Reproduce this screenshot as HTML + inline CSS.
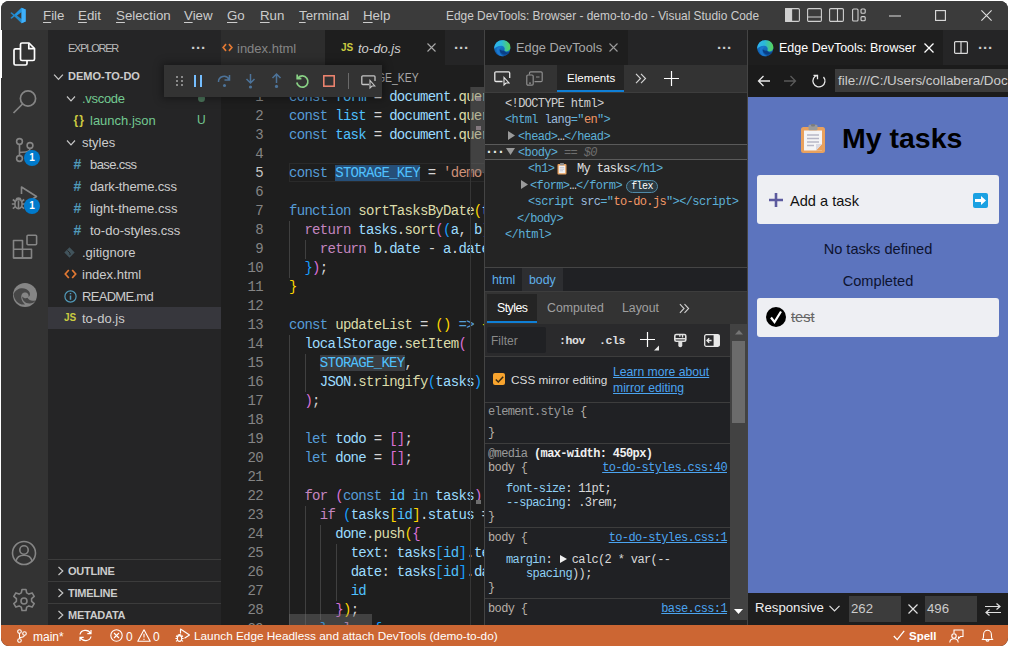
<!DOCTYPE html>
<html lang="en">
<head>
<meta charset="utf-8">
<title>VS Code</title>
<style>
*{box-sizing:border-box;margin:0;padding:0}
html,body{width:1009px;height:647px;overflow:hidden;background:#fff;font-family:"Liberation Sans",sans-serif;}
#win{position:absolute;left:1px;top:1px;width:1007px;height:645px;background:#1e1e1e;border-radius:8px;overflow:hidden;color:#ccc;font-size:13px}
.abs{position:absolute}
.t{position:absolute;white-space:pre;line-height:1}
svg{position:absolute;overflow:visible}
/* title bar */
#title{left:0;top:0;width:1007px;height:29px;background:#3b3b3b}
#title .m{top:8px;font-size:13.3px;color:#ccc}
#title .m u{text-decoration-thickness:1px;text-underline-offset:2px}
/* activity */
#act{left:0;top:29px;width:47px;height:595px;background:#333333}
/* sidebar */
#side{left:47px;top:29px;width:173px;height:595px;background:#252526}
.row{position:absolute;left:0;width:173px;height:22px}
.row .t{top:5px;font-size:13px;color:#ccc}
/* editor 1 */
#ed1{left:220px;top:29px;width:264px;height:595px;background:#1e1e1e;overflow:hidden;border-right:1px solid #444}
.code{position:absolute;left:0;width:400px;height:19px;font-family:"Liberation Mono",monospace;font-size:14px;letter-spacing:-0.7px;line-height:19px;white-space:pre;color:#d4d4d4}
.ln{position:absolute;left:0;width:42px;text-align:right;color:#858585}
.cx{position:absolute;left:68px}
.k{color:#569cd6}.v{color:#9cdcfe}.c{color:#4fc1ff}.f{color:#dcdcaa}.s{color:#ce9178}.p{color:#c586c0}
.b1{color:#ffd700}.b2{color:#da70d6}.b3{color:#179fff}
/* devtools */
#dt{left:484px;top:29px;width:263px;height:595px;background:#242424;overflow:hidden}
.mono{font-family:"Liberation Mono",monospace}
.dm{font-size:12px;letter-spacing:-.63px;margin-top:1px}
/* browser */
#br{left:747px;top:29px;width:260px;height:595px;background:#1e1e1e;overflow:hidden}
#dt{border-right:1px solid #444}
/* status */
#status{left:0;top:624px;width:1007px;height:21px;background:#cc6633;color:#fff}
#status .t{top:6px;font-size:12px;color:#fff}
</style>
</head>
<body>
<div id="win">

<!-- TITLE BAR -->
<div id="title" class="abs">
  <svg style="left:9px;top:6px" width="16" height="17" viewBox="0 0 100 100"><path d="M72 2 L28 44 L10 30 L2 34 L20 50 L2 66 L10 70 L28 56 L72 98 L98 87 L98 13 Z M72 28 L72 72 L43 50 Z" fill="#2489ca"/><path d="M72 2 L98 13 L98 87 L72 98 Z" fill="#3fb0fb"/><path d="M72 2 L28 44 L43 50 L72 28 Z" fill="#1f9cf0" opacity=".6"/></svg>
  <span class="t m" style="left:42px"><u>F</u>ile</span>
  <span class="t m" style="left:77px"><u>E</u>dit</span>
  <span class="t m" style="left:115px"><u>S</u>election</span>
  <span class="t m" style="left:183px"><u>V</u>iew</span>
  <span class="t m" style="left:226px"><u>G</u>o</span>
  <span class="t m" style="left:259px"><u>R</u>un</span>
  <span class="t m" style="left:298px"><u>T</u>erminal</span>
  <span class="t m" style="left:362px"><u>H</u>elp</span>
  <span class="t" style="left:445px;top:10px;font-size:11.9px;color:#ccc">Edge DevTools: Browser - demo-to-do - Visual Studio Code</span>
  <svg style="left:784px;top:7px" width="15" height="14" viewBox="0 0 15 14" fill="none" stroke="#d0d0d0" stroke-width="1.1"><rect x="0.6" y="0.6" width="13.8" height="12.8" rx="1.2"/><rect x="0.6" y="0.6" width="6" height="12.8" fill="#d0d0d0"/></svg>
  <svg style="left:806px;top:7px" width="15" height="14" viewBox="0 0 15 14" fill="none" stroke="#d0d0d0" stroke-width="1.1"><rect x="0.6" y="0.6" width="13.8" height="12.8" rx="1.2"/><path d="M0.6 9 H14.4"/></svg>
  <svg style="left:828px;top:7px" width="15" height="14" viewBox="0 0 15 14" fill="none" stroke="#d0d0d0" stroke-width="1.1"><rect x="0.6" y="0.6" width="13.8" height="12.8" rx="1.2"/><path d="M8.5 0.6 V13.4"/></svg>
  <svg style="left:851px;top:7px" width="14" height="14" viewBox="0 0 14 14" fill="none" stroke="#d0d0d0" stroke-width="1.1"><rect x="0.6" y="1" width="5.4" height="12" rx="1"/><rect x="9" y="1" width="4.2" height="4.2" rx="1"/><rect x="9" y="8.6" width="4.2" height="4.2" rx="1"/></svg>
  <svg style="left:888px;top:14px" width="12" height="2" viewBox="0 0 12 2"><path d="M0 1 H12" stroke="#e0e0e0" stroke-width="1.1"/></svg>
  <svg style="left:934px;top:9px" width="11" height="11" viewBox="0 0 11 11" fill="none" stroke="#e0e0e0" stroke-width="1.1"><rect x="0.6" y="0.6" width="9.8" height="9.8"/></svg>
  <svg style="left:980px;top:9px" width="11" height="11" viewBox="0 0 11 11" stroke="#e0e0e0" stroke-width="1.1"><path d="M0.4 0.4 L10.6 10.6 M10.6 0.4 L0.4 10.6"/></svg>
</div>

<!-- ACTIVITY BAR -->
<div id="act" class="abs">
  <div class="abs" style="left:0;top:0;width:1px;height:48px;background:#fff"></div>
  <!-- files -->
  <svg style="left:11px;top:11px" width="24" height="26" viewBox="0 0 24 26" fill="none" stroke="#fff" stroke-width="1.7" stroke-linejoin="round"><path d="M8.5 7.5 V3.5 a1.5 1.5 0 0 1 1.5 -1.5 H17 L22.5 7.5 V18 a1.5 1.5 0 0 1 -1.5 1.5 H10 a1.5 1.5 0 0 1 -1.5 -1.5 Z"/><path d="M16.8 2.2 V7.7 H22.3"/><path d="M8.5 7.8 H3.5 a1.5 1.5 0 0 0 -1.5 1.5 V22.5 a1.5 1.5 0 0 0 1.5 1.5 H13.5 a1.5 1.5 0 0 0 1.5 -1.5 V19.5"/></svg>
  <!-- search -->
  <svg style="left:11px;top:58px" width="26" height="26" viewBox="0 0 26 26" fill="none" stroke="#858585" stroke-width="1.7"><circle cx="16" cy="10.5" r="7.6"/><path d="M10.5 16 L1.5 25"/></svg>
  <!-- scm -->
  <svg style="left:11px;top:106px" width="26" height="28" viewBox="0 0 26 28" fill="none" stroke="#858585" stroke-width="1.6"><circle cx="7.5" cy="5.5" r="2.9"/><circle cx="7.5" cy="22.5" r="2.9"/><circle cx="18" cy="9.5" r="2.9"/><path d="M7.5 8.4 V19.6 M18 12.4 C18 16.5 13 16 7.5 16.5"/></svg>
  <div class="abs" style="left:23px;top:120px;width:16px;height:16px;border-radius:8px;background:#007acc;color:#fff;font-size:10px;font-weight:bold;text-align:center;line-height:16px">1</div>
  <!-- debug -->
  <svg style="left:10px;top:154px" width="28" height="28" viewBox="0 0 28 28" fill="none" stroke="#858585" stroke-width="1.6" stroke-linejoin="round"><path d="M10.5 10 V3 L25.5 12.5 L19 16.5"/><ellipse cx="7.5" cy="20" rx="3.6" ry="4.6"/><path d="M5 16 a2.6 2.6 0 0 1 5 0 M3.9 20 H0.8 M11.1 20 H14.2 M4.4 17.5 L1.8 15.5 M10.6 17.5 L13.2 15.5 M4.4 22.7 L1.8 24.7 M10.6 22.7 L13.2 24.7 M7.5 16.5 V24.5"/></svg>
  <div class="abs" style="left:23px;top:168px;width:16px;height:16px;border-radius:8px;background:#007acc;color:#fff;font-size:10px;font-weight:bold;text-align:center;line-height:16px">1</div>
  <!-- extensions -->
  <svg style="left:11px;top:204px" width="26" height="26" viewBox="0 0 26 26" fill="none" stroke="#858585" stroke-width="1.6" stroke-linejoin="round"><path d="M1.5 6.5 H10.5 V24 H1.5 Z M1.5 15.2 H19.5 V24 H10.5 M10.5 15.2"/><path d="M1.5 24 H19.5"/><rect x="15" y="1.2" width="9.6" height="9.6" rx="1"/></svg>
  <!-- edge -->
  <svg style="left:12px;top:253px" width="24" height="24" viewBox="0 0 24 24"><circle cx="12" cy="12" r="12" fill="#858585"/><path d="M0.5 11 C3 5.5 9 4 13 6 C17.5 8.2 18 12.5 15.5 14 C16.5 10.5 13 8.5 10.5 9.8 C7 11.5 7.5 17.5 12 21.5 C6 22.5 1 17 0.5 11 Z" fill="#333" opacity=".75"/><path d="M9.2 13.5 C9 17 12 20.5 16.5 20.5 C19 20.5 21.5 19.3 22.8 17.2 C20 18.2 16 18 14.5 14.8 C13.5 15.5 10.5 15.5 9.2 13.5 Z" fill="#333" opacity=".75"/></svg>
  <!-- account -->
  <svg style="left:10px;top:510px" width="26" height="26" viewBox="0 0 26 26" fill="none" stroke="#858585" stroke-width="1.6"><circle cx="13" cy="13" r="11.5"/><circle cx="13" cy="10" r="4.2"/><path d="M5 21 C6 16.5 9 15.2 13 15.2 C17 15.2 20 16.5 21 21"/></svg>
  <!-- gear -->
  <svg style="left:10px;top:558px" width="26" height="26" viewBox="0 0 26 26" fill="none" stroke="#858585" stroke-width="1.6" stroke-linejoin="round"><circle cx="13" cy="13" r="3"/><path d="M11 1.5 h4 l.7 3.4 2.2 1.2 3.2-1.2 2.1 3.5 -2.6 2.3 v2.6 l2.6 2.3 -2.1 3.5 -3.2-1.2 -2.2 1.2 -.7 3.4 h-4 l-.7-3.4 -2.2-1.2 -3.2 1.2 -2.1-3.5 2.6-2.3 v-2.6 l-2.6-2.3 2.1-3.5 3.2 1.2 2.2-1.2 Z"/></svg>
</div>

<!-- SIDEBAR -->
<div id="side" class="abs">
  <span class="t" style="left:20px;top:13px;font-size:11px;letter-spacing:-1.25px;color:#bbb">EXPLORER</span>
  <span class="t" style="left:143px;top:10px;font-size:15px;color:#ccc;letter-spacing:0;font-weight:bold">···</span>
  <div class="row" style="top:35px"><svg style="left:5px;top:8px" width="11" height="8.8" viewBox="0 0 10 8" fill="none" stroke="#c5c5c5" stroke-width="1.2"><path d="M1 1.5 L5 5.8 L9 1.5"/></svg><span class="t" style="left:20px;top:6px;font-size:11px;font-weight:bold;color:#ccc">DEMO-TO-DO</span></div>
  <div class="row" style="top:57px"><svg style="left:18px;top:8px" width="10" height="8" viewBox="0 0 10 8" fill="none" stroke="#c5c5c5" stroke-width="1.2"><path d="M1 1.5 L5 5.8 L9 1.5"/></svg><span class="t" style="left:34px;color:#73c991;letter-spacing:-.3px">.vscode</span><div class="abs" style="left:150px;top:8px;width:7px;height:7px;border-radius:4px;background:#73c991;opacity:.5"></div></div>
  <div class="row" style="top:79px"><span class="t" style="left:25.5px;top:5px;font-size:12px;font-weight:bold;color:#cbcb41;letter-spacing:1px">{}</span><span class="t" style="left:42px;color:#73c991">launch.json</span><span class="t" style="left:149px;top:5px;font-size:12px;color:#73c991">U</span></div>
  <div class="row" style="top:101px"><svg style="left:18px;top:8px" width="10" height="8" viewBox="0 0 10 8" fill="none" stroke="#c5c5c5" stroke-width="1.2"><path d="M1 1.5 L5 5.8 L9 1.5"/></svg><span class="t" style="left:34px">styles</span></div>
  <div class="row" style="top:123px"><span class="t" style="left:25.5px;top:4px;font-size:14px;font-weight:bold;color:#519aba">#</span><span class="t" style="left:42px;letter-spacing:-.6px">base.css</span></div>
  <div class="row" style="top:145px"><span class="t" style="left:25.5px;top:4px;font-size:14px;font-weight:bold;color:#519aba">#</span><span class="t" style="left:42px;letter-spacing:-.15px">dark-theme.css</span></div>
  <div class="row" style="top:167px"><span class="t" style="left:25.5px;top:4px;font-size:14px;font-weight:bold;color:#519aba">#</span><span class="t" style="left:42px">light-theme.css</span></div>
  <div class="row" style="top:189px"><span class="t" style="left:25.5px;top:4px;font-size:14px;font-weight:bold;color:#519aba">#</span><span class="t" style="left:42px">to-do-styles.css</span></div>
  <div class="row" style="top:211px"><svg style="left:16px;top:6px" width="11" height="11" viewBox="0 0 11 11"><path d="M5.5 0.3 L10.7 5.5 L5.5 10.7 L0.3 5.5 Z" fill="#41535b"/><path d="M3.5 3.5 L6 6 M6 6 V8" stroke="#252526" stroke-width="1" fill="none"/></svg><span class="t" style="left:34px">.gitignore</span></div>
  <div class="row" style="top:233px"><svg style="left:16px;top:6px" width="13" height="10" viewBox="0 0 13 10" fill="none" stroke="#e37933" stroke-width="1.7"><path d="M4.8 1 L1.3 5 L4.8 9 M8.2 1 L11.7 5 L8.2 9"/></svg><span class="t" style="left:34px">index.html</span></div>
  <div class="row" style="top:255px"><svg style="left:16px;top:5px" width="13" height="13" viewBox="0 0 13 13" fill="none" stroke="#519aba" stroke-width="1.2"><circle cx="6.5" cy="6.5" r="5.6"/><path d="M6.5 5.5 V9.8 M6.5 3 V4.3" stroke-width="1.5"/></svg><span class="t" style="left:34px;letter-spacing:-.7px">README.md</span></div>
  <div class="row" style="top:277px;background:#37373d"><span class="t" style="left:16px;top:6px;font-size:10px;font-weight:bold;color:#cbcb41">JS</span><span class="t" style="left:34px">to-do.js</span></div>
  <div class="row" style="top:529px;border-top:1px solid #3c3c3c"><svg style="left:9px;top:6px" width="8" height="10" viewBox="0 0 8 10" fill="none" stroke="#c5c5c5" stroke-width="1.2"><path d="M1.5 1 L5.8 5 L1.5 9"/></svg><span class="t" style="left:20px;top:6px;font-size:11px;font-weight:bold;letter-spacing:-.25px;color:#ccc">OUTLINE</span></div>
  <div class="row" style="top:551px;border-top:1px solid #3c3c3c"><svg style="left:9px;top:6px" width="8" height="10" viewBox="0 0 8 10" fill="none" stroke="#c5c5c5" stroke-width="1.2"><path d="M1.5 1 L5.8 5 L1.5 9"/></svg><span class="t" style="left:20px;top:6px;font-size:11px;font-weight:bold;letter-spacing:-.25px;color:#ccc">TIMELINE</span></div>
  <div class="row" style="top:573px;border-top:1px solid #3c3c3c"><svg style="left:9px;top:6px" width="8" height="10" viewBox="0 0 8 10" fill="none" stroke="#c5c5c5" stroke-width="1.2"><path d="M1.5 1 L5.8 5 L1.5 9"/></svg><span class="t" style="left:20px;top:6px;font-size:11px;font-weight:bold;letter-spacing:-.25px;color:#ccc">METADATA</span></div>
</div>

<!-- EDITOR 1 -->
<div id="ed1" class="abs">
  <div class="abs" style="left:0;top:0;width:264px;height:35px;background:#252526"></div>
  <div class="abs" style="left:0;top:0;width:104px;height:35px;background:#2d2d2d"></div>
  <svg style="left:1px;top:13px" width="11" height="9" viewBox="0 0 13 10" fill="none" stroke="#e37933" stroke-width="1.9"><path d="M4.8 1 L1.3 5 L4.8 9 M8.2 1 L11.7 5 L8.2 9"/></svg>
  <span class="t" style="left:16px;top:12px;font-size:13px;color:#858585">index.html</span>
  <div class="abs" style="left:104px;top:0;width:120px;height:35px;background:#1e1e1e"></div>
  <span class="t" style="left:120px;top:13px;font-size:10px;font-weight:bold;color:#cbcb41">JS</span>
  <span class="t" style="left:137px;top:12px;font-size:13px;font-style:italic;color:#d0d0d0">to-do.js</span>
  <svg style="left:206px;top:13px" width="9" height="9" viewBox="0 0 9 9" stroke="#a8a8a8" stroke-width="1.1"><path d="M0.5 0.5 L8.5 8.5 M8.5 0.5 L0.5 8.5"/></svg>
  <span class="t" style="left:233px;top:10px;font-size:15px;color:#ccc;letter-spacing:0;font-weight:bold">···</span>
  <span class="t" style="right:65px;top:41px;font-size:13px;color:#a9a9a9;transform:scaleX(.8);transform-origin:right center">STORAGE_KEY</span>
  <div class="abs" style="left:68px;top:133px;width:196px;height:19px;border:1px solid #2a2a2a;border-right:0"></div>
  <div class="abs" style="left:68px;top:191px;width:1px;height:57px;background:#404040"></div>
  <div class="abs" style="left:84px;top:210px;width:1px;height:19px;background:#404040"></div>
  <div class="abs" style="left:68px;top:305px;width:1px;height:304px;background:#404040"></div>
  <div class="abs" style="left:84px;top:324px;width:1px;height:38px;background:#404040"></div>
  <div class="abs" style="left:84px;top:476px;width:1px;height:133px;background:#404040"></div>
  <div class="abs" style="left:99px;top:495px;width:1px;height:95px;background:#404040"></div>
  <div class="abs" style="left:115px;top:514px;width:1px;height:57px;background:#404040"></div>
  <div class="code" style="top:58px"><span class="ln">1</span><span class="cx"><span class="k">const</span> <span class="c">form</span> = <span class="v">document</span>.<span class="f">querySelector</span><span class="b1">(</span><span class="s">'form'</span><span class="b1">)</span>;</span></div>
  <div class="code" style="top:77px"><span class="ln">2</span><span class="cx"><span class="k">const</span> <span class="c">list</span> = <span class="v">document</span>.<span class="f">querySelector</span><span class="b1">(</span><span class="s">'#tasks'</span><span class="b1">)</span>;</span></div>
  <div class="code" style="top:96px"><span class="ln">3</span><span class="cx"><span class="k">const</span> <span class="c">task</span> = <span class="v">document</span>.<span class="f">querySelector</span><span class="b1">(</span><span class="s">'#new-task'</span><span class="b1">)</span>;</span></div>
  <div class="code" style="top:115px"><span class="ln">4</span><span class="cx"></span></div>
  <div class="code" style="top:134px"><span class="ln" style="color:#c6c6c6">5</span><span class="cx"><span class="k">const</span> <span style="background:#264f78"><span class="c">STORAGE_KEY</span></span> = <span class="s">'demo-to-do-tasks'</span>;</span></div>
  <div class="code" style="top:153px"><span class="ln">6</span><span class="cx"></span></div>
  <div class="code" style="top:172px"><span class="ln">7</span><span class="cx"><span class="k">function</span> <span class="f">sortTasksByDate</span><span class="b1">(</span><span class="v">tasks</span><span class="b1">)</span> <span class="b1">{</span></span></div>
  <div class="code" style="top:191px"><span class="ln">8</span><span class="cx">  <span class="p">return</span> <span class="v">tasks</span>.<span class="f">sort</span><span class="b2">(</span><span class="b3">(</span><span class="v">a</span>, <span class="v">b</span><span class="b3">)</span> <span class="k">=></span> <span class="b3">{</span></span></div>
  <div class="code" style="top:210px"><span class="ln">9</span><span class="cx">    <span class="p">return</span> <span class="v">b</span>.<span class="v">date</span> - <span class="v">a</span>.<span class="v">date</span>;</span></div>
  <div class="code" style="top:229px"><span class="ln">10</span><span class="cx">  <span class="b3">}</span><span class="b2">)</span>;</span></div>
  <div class="code" style="top:248px"><span class="ln">11</span><span class="cx"><span class="b1">}</span></span></div>
  <div class="code" style="top:267px"><span class="ln">12</span><span class="cx"></span></div>
  <div class="code" style="top:286px"><span class="ln">13</span><span class="cx"><span class="k">const</span> <span class="f">updateList</span> = <span class="b1">()</span> <span class="k">=></span> <span class="b1">{</span></span></div>
  <div class="code" style="top:305px"><span class="ln">14</span><span class="cx">  <span class="v">localStorage</span>.<span class="f">setItem</span><span class="b2">(</span></span></div>
  <div class="code" style="top:324px"><span class="ln">15</span><span class="cx">    <span style="background:#3a3d41"><span class="c">STORAGE_KEY</span></span>,</span></div>
  <div class="code" style="top:343px"><span class="ln">16</span><span class="cx">    <span class="v">JSON</span>.<span class="f">stringify</span><span class="b3">(</span><span class="v">tasks</span><span class="b3">)</span></span></div>
  <div class="code" style="top:362px"><span class="ln">17</span><span class="cx">  <span class="b2">)</span>;</span></div>
  <div class="code" style="top:381px"><span class="ln">18</span><span class="cx"></span></div>
  <div class="code" style="top:400px"><span class="ln">19</span><span class="cx">  <span class="k">let</span> <span class="v">todo</span> = <span class="b2">[]</span>;</span></div>
  <div class="code" style="top:419px"><span class="ln">20</span><span class="cx">  <span class="k">let</span> <span class="v">done</span> = <span class="b2">[]</span>;</span></div>
  <div class="code" style="top:438px"><span class="ln">21</span><span class="cx"></span></div>
  <div class="code" style="top:457px"><span class="ln">22</span><span class="cx">  <span class="p">for</span> <span class="b2">(</span><span class="k">const</span> <span class="c">id</span> <span class="k">in</span> <span class="v">tasks</span><span class="b2">)</span> <span class="b2">{</span></span></div>
  <div class="code" style="top:476px"><span class="ln">23</span><span class="cx">    <span class="p">if</span> <span class="b3">(</span><span class="v">tasks</span><span class="b1">[</span><span class="c">id</span><span class="b1">]</span>.<span class="v">status</span> === <span class="s">'done'</span><span class="b3">)</span> <span class="b3">{</span></span></div>
  <div class="code" style="top:495px"><span class="ln">24</span><span class="cx">      <span class="v">done</span>.<span class="f">push</span><span class="b1">(</span><span class="b2">{</span></span></div>
  <div class="code" style="top:514px"><span class="ln">25</span><span class="cx">        <span class="v">text</span>: <span class="v">tasks</span><span class="b3">[</span><span class="c">id</span><span class="b3">]</span>.<span class="v">text</span>,</span></div>
  <div class="code" style="top:533px"><span class="ln">26</span><span class="cx">        <span class="v">date</span>: <span class="v">tasks</span><span class="b3">[</span><span class="c">id</span><span class="b3">]</span>.<span class="v">date</span>,</span></div>
  <div class="code" style="top:552px"><span class="ln">27</span><span class="cx">        <span class="c">id</span></span></div>
  <div class="code" style="top:571px"><span class="ln">28</span><span class="cx">      <span class="b2">}</span><span class="b1">)</span>;</span></div>
  <div class="code" style="top:590px"><span class="ln">29</span><span class="cx">    <span class="b3">}</span> <span class="p">else</span> <span class="b3">{</span></span></div>
  <div class="abs" style="left:249px;top:57px;width:1px;height:538px;background:#353535"></div>
  <div class="abs" style="left:250px;top:57px;width:14px;height:86px;background:rgba(121,121,121,.4)"></div>
  <div class="abs" style="left:255px;top:67px;width:5px;height:4px;background:#857a80"></div>
  <div class="abs" style="left:255px;top:96px;width:5px;height:4px;background:#857a80"></div>
  <div class="abs" style="left:255px;top:470px;width:5px;height:4px;background:#6e6e6e"></div>
  <div class="abs" style="left:68px;top:584px;width:83px;height:11px;background:rgba(121,121,121,.4)"></div>
</div>

<!-- DEVTOOLS -->
<div id="dt" class="abs">
  <div class="abs" style="left:0;top:0;width:263px;height:35px;background:#252526"></div>
  <div class="abs" style="left:0;top:0;width:143px;height:35px;background:#1e1e1e"></div>
  <svg style="left:9px;top:10px" width="16.5" height="16.5" viewBox="0 0 24 24"><defs><linearGradient id="eg1" x1="0" y1="0" x2="1" y2="0"><stop offset="0" stop-color="#2fb4ee"/><stop offset=".45" stop-color="#2bb9d8"/><stop offset="1" stop-color="#5ad552"/></linearGradient><linearGradient id="eh1" x1="0" y1="0" x2="0" y2="1"><stop offset="0" stop-color="#1e8fdd"/><stop offset="1" stop-color="#0c4f9e"/></linearGradient></defs><circle cx="12" cy="12" r="11.8" fill="url(#eh1)"/><path d="M0.3 12.5 C0.5 5 6 0.2 12.5 0.2 C19.5 0.2 23.8 5.5 23.8 10.5 C23.8 14.5 21 16.6 18 16.6 C15.5 16.6 14.6 15.4 15.3 14 C16.4 11.8 14.5 8.4 10.8 8.4 C6 8.4 1.5 11 0.3 12.5 Z" fill="url(#eg1)"/><path d="M9.2 9 C5 9.8 2.3 14 4.2 18.5 C6 22.5 10.5 24.5 15 23.2 C10.5 22.5 7.5 18.5 8.2 14.5 C8.5 12.5 9.5 11 11 10.2 Z" fill="#1a78cf"/><path d="M8.3 13.6 C8 18 11.5 21.2 16 21.2 C18.8 21.2 21.3 20 22.8 17.6 C20 18.8 16.2 18.4 14.6 15.2 C13 15.9 9.6 15.6 8.3 13.6 Z" fill="#0a3f86"/></svg>
  <span class="t" style="left:31px;top:12px;font-size:12.8px;color:#a8a8a8">Edge DevTools</span>
  <svg style="left:124px;top:13px" width="9" height="9" viewBox="0 0 9 9" stroke="#9a9a9a" stroke-width="1.1"><path d="M0.5 0.5 L8.5 8.5 M8.5 0.5 L0.5 8.5"/></svg>
  <span class="t" style="left:232px;top:10px;font-size:15px;color:#ccc;letter-spacing:0;font-weight:bold">···</span>
  <div class="abs" style="left:0;top:35px;width:263px;height:28px;background:#333333;border-bottom:1px solid #3d3d3d"></div>
  <div class="abs" style="left:72px;top:35px;width:67px;height:27px;background:#242424;border-bottom:2px solid #0f7fd6"></div>
  <svg style="left:9px;top:41px" width="17" height="15" viewBox="0 0 17 15" fill="none" stroke="#e8e8e8" stroke-width="1.3"><path d="M8.5 10.5 H2 a1.2 1.2 0 0 1 -1.2 -1.2 V2 a1.2 1.2 0 0 1 1.2 -1.2 H14.5 a1.2 1.2 0 0 1 1.2 1.2 V7"/><path d="M10 6.5 V14 L12 12 L15 12 Z" stroke-width="1.1"/></svg>
  <svg style="left:41px;top:41px" width="17" height="15" viewBox="0 0 17 15" fill="none" stroke="#8f8f8f" stroke-width="1.2"><path d="M3.5 3.5 V2 a1.2 1.2 0 0 1 1.2 -1.2 H15 a1.2 1.2 0 0 1 1.2 1.2 V9.5 a1.2 1.2 0 0 1 -1.2 1.2 H8.5"/><rect x="0.8" y="4" width="6.4" height="10.2" rx="1.2"/><path d="M3 12.2 H5 M10 6 H13.5"/></svg>
  <span class="t" style="left:82px;top:42px;font-size:11.6px;color:#fff">Elements</span>
  <svg style="left:150px;top:43px" width="12" height="11" viewBox="0 0 12 11" fill="none" stroke="#d0d0d0" stroke-width="1.2"><path d="M1 0.8 L5.5 5.5 L1 10.2 M6 0.8 L10.5 5.5 L6 10.2"/></svg>
  <svg style="left:179px;top:41px" width="15" height="15" viewBox="0 0 15 15" stroke="#fff" stroke-width="1.2"><path d="M7.5 0 V15 M0 7.5 H15"/></svg>
  <div class="abs" style="left:0;top:63px;width:263px;height:176px;background:#242424"></div>
  <div class="abs" style="left:0;top:114px;width:263px;height:16px;background:#2c2c2c;border-top:1px solid #5a5a5a;border-bottom:1px solid #5a5a5a"></div>
  <span class="t mono dm" style="left:20px;top:67px"><span style="color:#d0d0d0">&lt;!DOCTYPE html&gt;</span></span>
  <span class="t mono dm" style="left:20px;top:83px"><span style="color:#5db0d7">&lt;html </span><span style="color:#9bbbdc">lang</span><span style="color:#5db0d7">="</span><span style="color:#f29766">en</span><span style="color:#5db0d7">"&gt;</span></span>
  <svg style="left:23px;top:101px" width="7" height="9" viewBox="0 0 7 9"><path d="M0 0 L7 4.5 L0 9 Z" fill="#9a9a9a"/></svg>
  <span class="t mono dm" style="left:33px;top:100px"><span style="color:#5db0d7">&lt;head&gt;</span><span style="color:#ddd">…</span><span style="color:#5db0d7">&lt;/head&gt;</span></span>
  <span class="t" style="left:2px;top:115px;font-size:14px;font-weight:bold;color:#e8e8e8;letter-spacing:1.4px">···</span>
  <svg style="left:21px;top:118px" width="9" height="7" viewBox="0 0 9 7"><path d="M0 0 L9 0 L4.5 7 Z" fill="#9a9a9a"/></svg>
  <span class="t mono dm" style="left:33px;top:116px"><span style="color:#5db0d7">&lt;body&gt;</span><span style="color:#6e6e6e;font-style:italic"> == $0</span></span>
  <span class="t mono dm" style="left:43px;top:132px"><span style="color:#5db0d7">&lt;h1&gt;</span><span style="color:#e0e0e0;margin-left:3px">   My tasks</span><span style="color:#5db0d7">&lt;/h1&gt;</span></span>
  <svg style="left:72px;top:133px" width="10" height="12" viewBox="0 0 10 12"><rect x="0.5" y="1" width="9" height="10.5" rx="1" fill="#e8a05c"/><rect x="1.8" y="2.6" width="6.4" height="7.6" fill="#f2f2f2"/><rect x="3" y="0" width="4" height="2.2" rx=".6" fill="#8e8e8e"/><path d="M2.8 4.6 H7.2 M2.8 6.2 H7.2 M2.8 7.8 H6" stroke="#b9b9c6" stroke-width=".7"/></svg>
  <svg style="left:36px;top:150px" width="7" height="9" viewBox="0 0 7 9"><path d="M0 0 L7 4.5 L0 9 Z" fill="#9a9a9a"/></svg>
  <span class="t mono dm" style="left:45px;top:149px"><span style="color:#5db0d7">&lt;form&gt;</span><span style="color:#ddd">…</span><span style="color:#5db0d7">&lt;/form&gt;</span></span>
  <div class="abs" style="left:141px;top:150px;width:32px;height:13px;border:1px solid #4f8aa8;border-radius:7px;background:#2b3a42;color:#fff;font-size:10px;line-height:11px;text-align:center;font-family:'Liberation Mono',monospace;letter-spacing:-.6px">flex</div>
  <span class="t mono dm" style="left:43px;top:165px"><span style="color:#5db0d7">&lt;script </span><span style="color:#9bbbdc">src</span><span style="color:#5db0d7">="</span><span style="color:#f29766">to-do.js</span><span style="color:#5db0d7">"&gt;&lt;/script&gt;</span></span>
  <span class="t mono dm" style="left:32px;top:182px"><span style="color:#5db0d7">&lt;/body&gt;</span></span>
  <span class="t mono dm" style="left:20px;top:198px"><span style="color:#5db0d7">&lt;/html&gt;</span></span>
  <div class="abs" style="left:0;top:237px;width:263px;height:24px;background:#202124;border-top:1px solid #454545"></div>
  <div class="abs" style="left:37px;top:238px;width:41px;height:23px;background:#2d2e31"></div>
  <span class="t" style="left:7px;top:244px;font-size:12.3px;color:#5fb0ea">html</span>
  <span class="t" style="left:44px;top:244px;font-size:12.3px;color:#5fb0ea">body</span>
  <div class="abs" style="left:0;top:294px;width:245px;height:301px;background:#202124"></div>
  <div class="abs" style="left:0;top:261px;width:263px;height:33px;background:#333333;border-top:1px solid #3d3d3d"></div>
  <div class="abs" style="left:2px;top:264px;width:50px;height:29px;background:#242424;border-bottom:2px solid #0f7fd6"></div>
  <span class="t" style="left:12px;top:272px;font-size:12.3px;letter-spacing:-.5px;color:#fff">Styles</span>
  <span class="t" style="left:62px;top:272px;font-size:12.3px;color:#a0a0a0">Computed</span>
  <span class="t" style="left:137px;top:272px;font-size:12.3px;color:#a0a0a0">Layout</span>
  <svg style="left:194px;top:273px" width="11" height="11" viewBox="0 0 12 11" fill="none" stroke="#d0d0d0" stroke-width="1.2"><path d="M1 0.8 L5.5 5.5 L1 10.2 M6 0.8 L10.5 5.5 L6 10.2"/></svg>
  <div class="abs" style="left:0;top:294px;width:245px;height:33px;background:#2a2a2c;border-bottom:1px solid #3d3d3d"></div>
  <div class="abs" style="left:2px;top:297px;width:59px;height:26px;background:#202124;border-radius:2px"></div>
  <span class="t" style="left:6px;top:305px;font-size:12px;color:#8a8a8a">Filter</span>
  <span class="t mono" style="left:74px;top:305px;font-size:11.5px;font-weight:bold;color:#e0e0e0;letter-spacing:-.4px">:hov</span>
  <span class="t mono" style="left:114px;top:305px;font-size:11.5px;font-weight:bold;color:#e0e0e0;letter-spacing:-.4px">.cls</span>
  <svg style="left:155px;top:302px" width="18" height="18" viewBox="0 0 18 18"><path d="M7.5 0 V15 M0 7.5 H15" stroke="#fff" stroke-width="1.2"/><path d="M19 13.5 V18.5 H14 Z" fill="#e8e8e8"/></svg>
  <svg style="left:189px;top:303px" width="12.6" height="15" viewBox="0 0 14 15"><rect x="0.9" y="0.9" width="12.2" height="7.4" rx="1.6" fill="none" stroke="#e0e0e0" stroke-width="1.8"/><path d="M6.5 1 V3.2 M9.5 1 V4.2 M1 5.6 H13" stroke="#e0e0e0" stroke-width="1.5"/><path d="M4.8 8.5 V13 a2.2 2 0 0 0 4.4 0 V8.5 Z" fill="#e0e0e0"/></svg>
  <svg style="left:219px;top:304px" width="16" height="13" viewBox="0 0 16 13"><rect x="0.7" y="0.7" width="14.6" height="11.6" rx="1.5" fill="none" stroke="#e8e8e8" stroke-width="1.3"/><rect x="9.6" y="1" width="5.8" height="11" fill="#e8e8e8"/><path d="M7.6 6.5 H3.2 M5.2 4.2 L3 6.5 L5.2 8.8" stroke="#e8e8e8" stroke-width="1.4" fill="none"/></svg>
  <div class="abs" style="left:0;top:328px;width:245px;height:45px;background:#202124;border-bottom:1px solid #3d3d3d"></div>
  <div class="abs" style="left:8px;top:343px;width:12px;height:12px;border-radius:2px;background:#f8a42e"></div>
  <svg style="left:10px;top:346px" width="9" height="7" viewBox="0 0 9 7" fill="none" stroke="#3a2a10" stroke-width="1.5"><path d="M0.8 3.5 L3.3 6 L8.2 0.8"/></svg>
  <span class="t" style="left:26px;top:344.5px;font-size:11.8px;color:#dcdcdc">CSS mirror editing</span>
  <span class="t" style="left:128px;top:336px;font-size:12.2px;color:#4ba4f0;text-decoration:underline">Learn more about</span>
  <span class="t" style="left:128px;top:352px;font-size:12.2px;color:#4ba4f0;text-decoration:underline">mirror editing</span>
  <span class="t mono dm" style="left:3px;top:375px;"><span style="color:#9a9a9a">element.style </span><span style="color:#b8b0a8">{</span></span>
  <span class="t mono dm" style="left:3px;top:396px;"><span style="color:#b8b0a8">}</span></span>
  <div class="abs" style="left:0;top:413px;width:245px;height:1px;background:#3d3d3d"></div>
  <span class="t mono dm" style="left:3px;top:417px;"><span style="color:#9a9a9a">@media </span><span style="color:#f0f0f0;font-weight:bold">(max-width: 450px)</span></span>
  <span class="t mono dm" style="left:3px;top:431px;"><span style="color:#b8b0a8">body {</span></span>
  <span class="t mono dm" style="right:20px;top:431px;color:#4ba4f0;text-decoration:underline">to-do-styles.css:40</span>
  <span class="t mono dm" style="left:21px;top:452px;"><span style="color:#8fd0f5">font-size</span><span style="color:#d8d8d8">: 11pt;</span></span>
  <span class="t mono dm" style="left:21px;top:466px;"><span style="color:#8fd0f5">--spacing</span><span style="color:#d8d8d8">: .3rem;</span></span>
  <span class="t mono dm" style="left:3px;top:480px;"><span style="color:#b8b0a8">}</span></span>
  <div class="abs" style="left:0;top:497px;width:245px;height:1px;background:#3d3d3d"></div>
  <span class="t mono dm" style="left:3px;top:501px;"><span style="color:#b8b0a8">body {</span></span>
  <span class="t mono dm" style="right:20px;top:501px;color:#4ba4f0;text-decoration:underline">to-do-styles.css:1</span>
  <span class="t mono dm" style="left:21px;top:523px;"><span style="color:#8fd0f5">margin</span><span style="color:#d8d8d8">:   calc(2 * var(--</span></span>
  <svg style="left:75px;top:525px" width="7" height="8" viewBox="0 0 7 8"><path d="M0 0 L7 4 L0 8 Z" fill="#f0f0f0"/></svg>
  <span class="t mono dm" style="left:41px;top:537px;"><span style="color:#8fd0f5">spacing</span><span style="color:#d8d8d8">));</span></span>
  <span class="t mono dm" style="left:3px;top:551px;"><span style="color:#b8b0a8">}</span></span>
  <div class="abs" style="left:0;top:568px;width:245px;height:1px;background:#3d3d3d"></div>
  <span class="t mono dm" style="left:3px;top:572px;"><span style="color:#b8b0a8">body {</span></span>
  <span class="t mono dm" style="right:20px;top:572px;color:#4ba4f0;text-decoration:underline">base.css:1</span>
  <div class="abs" style="left:245px;top:294px;width:17px;height:296px;background:#424242"></div>
  <div class="abs" style="left:247px;top:311px;width:13px;height:82px;background:#6b6b6b"></div>
  <svg style="left:249.5px;top:300px" width="8" height="4.5" viewBox="0 0 9 5"><path d="M0 5 L4.5 0 L9 5 Z" fill="#757575"/></svg>
  <svg style="left:249px;top:579px" width="9" height="5" viewBox="0 0 9 5"><path d="M0 0 L4.5 5 L9 0 Z" fill="#fff"/></svg>
</div>

<!-- BROWSER -->
<div id="br" class="abs">
  <div class="abs" style="left:0;top:0;width:260px;height:35px;background:#252526"></div>
  <div class="abs" style="left:0;top:0;width:195px;height:35px;background:#1e1e1e"></div>
  <svg style="left:9px;top:10px" width="16.5" height="16.5" viewBox="0 0 24 24"><defs><linearGradient id="eg2" x1="0" y1="0" x2="1" y2="0"><stop offset="0" stop-color="#2fb4ee"/><stop offset=".45" stop-color="#2bb9d8"/><stop offset="1" stop-color="#5ad552"/></linearGradient><linearGradient id="eh2" x1="0" y1="0" x2="0" y2="1"><stop offset="0" stop-color="#1e8fdd"/><stop offset="1" stop-color="#0c4f9e"/></linearGradient></defs><circle cx="12" cy="12" r="11.8" fill="url(#eh2)"/><path d="M0.3 12.5 C0.5 5 6 0.2 12.5 0.2 C19.5 0.2 23.8 5.5 23.8 10.5 C23.8 14.5 21 16.6 18 16.6 C15.5 16.6 14.6 15.4 15.3 14 C16.4 11.8 14.5 8.4 10.8 8.4 C6 8.4 1.5 11 0.3 12.5 Z" fill="url(#eg2)"/><path d="M9.2 9 C5 9.8 2.3 14 4.2 18.5 C6 22.5 10.5 24.5 15 23.2 C10.5 22.5 7.5 18.5 8.2 14.5 C8.5 12.5 9.5 11 11 10.2 Z" fill="#1a78cf"/><path d="M8.3 13.6 C8 18 11.5 21.2 16 21.2 C18.8 21.2 21.3 20 22.8 17.6 C20 18.8 16.2 18.4 14.6 15.2 C13 15.9 9.6 15.6 8.3 13.6 Z" fill="#0a3f86"/></svg>
  <span class="t" style="left:31px;top:12px;font-size:12.5px;color:#fff">Edge DevTools: Browser</span>
  <svg style="left:176px;top:13px" width="10" height="10" viewBox="0 0 10 10" stroke="#fff" stroke-width="1.3"><path d="M0.5 0.5 L9.5 9.5 M9.5 0.5 L0.5 9.5"/></svg>
  <svg style="left:206px;top:11px" width="14" height="13" viewBox="0 0 14 13" fill="none" stroke="#d8d8d8" stroke-width="1.2"><rect x="0.6" y="0.6" width="12.8" height="11.8" rx="1"/><path d="M7 0.6 V12.4"/></svg>
  <span class="t" style="left:230px;top:10px;font-size:15px;color:#ccc;letter-spacing:0;font-weight:bold">···</span>
  <div class="abs" style="left:0;top:35px;width:260px;height:32px;background:#1b1b1b"></div>
  <svg style="left:9px;top:45px" width="13" height="12" viewBox="0 0 13 12" fill="none" stroke="#e8e8e8" stroke-width="1.3"><path d="M13 6 H1.5 M6.5 1 L1.5 6 L6.5 11"/></svg>
  <svg style="left:36px;top:45px" width="13" height="12" viewBox="0 0 13 12" fill="none" stroke="#5a5a5a" stroke-width="1.3"><path d="M0 6 H11.5 M6.5 1 L11.5 6 L6.5 11"/></svg>
  <svg style="left:64px;top:43px" width="15" height="15" viewBox="0 0 15 15" fill="none" stroke="#e8e8e8" stroke-width="1.3"><path d="M11.5 4 A6 6 0 1 1 5.4 2.1 M1.5 2.4 H5.5 V6.2"/></svg>
  <div class="abs" style="left:87px;top:39px;width:173px;height:23px;background:#3c3c3c"></div>
  <span class="t" style="left:90px;top:44px;font-size:13.4px;color:#ccc">file:///C:/Users/collabera/Doc</span>
  <div class="abs" style="left:0;top:67px;width:260px;height:496px;background:#5c74be"></div>
  <svg style="left:52px;top:94px" width="26" height="30" viewBox="0 0 26 30"><rect x="1" y="3" width="24" height="26" rx="2.5" fill="#e9a15e"/><rect x="4" y="6.5" width="18" height="20" fill="#f4f4f6"/><path d="M22 20 L16 26.5 H22 Z" fill="#e9a15e"/><path d="M16 26.5 L16 20 L22 20 Z" fill="#d9d9e3"/><rect x="8.5" y="0.8" width="9" height="5.5" rx="1.2" fill="#9b9b9b"/><rect x="11" y="0" width="4" height="2.4" rx="1" fill="#7d7d7d"/><path d="M7 11 H19 M7 14.5 H19 M7 18 H19 M7 21.5 H14" stroke="#b6b6c6" stroke-width="1.4"/></svg>
  <span class="t" style="left:94px;top:94px;font-size:28.5px;font-weight:bold;color:#000;letter-spacing:0px">My tasks</span>
  <div class="abs" style="left:9px;top:145px;width:242px;height:49px;background:#eeeff3;border-radius:3px"></div>
  <svg style="left:21px;top:163px" width="14" height="14" viewBox="0 0 14 14" stroke="#5c5a9e" stroke-width="2.6"><path d="M7 0 V14 M0 7 H14"/></svg>
  <span class="t" style="left:42px;top:164px;font-size:14.6px;color:#111">Add a task</span>
  <div class="abs" style="left:225px;top:163px;width:15px;height:15px;background:#1ba1e2;border-radius:2px"></div>
  <svg style="left:227px;top:166px" width="11" height="9" viewBox="0 0 11 9" fill="#fff"><path d="M0 3 H6 V0 L11 4.5 L6 9 V6 H0 Z"/></svg>
  <span class="t" style="left:0;width:260px;text-align:center;top:212px;font-size:14.6px;color:#0d1330">No tasks defined</span>
  <span class="t" style="left:0;width:260px;text-align:center;top:244px;font-size:14.6px;color:#0d1330">Completed</span>
  <div class="abs" style="left:9px;top:268px;width:242px;height:39px;background:#eeeff3;border-radius:3px"></div>
  <svg style="left:18px;top:277px" width="20" height="20" viewBox="0 0 20 20"><circle cx="10" cy="10" r="10" fill="#000"/><path d="M5 10.5 L8.5 15 L15 4.5" fill="none" stroke="#fff" stroke-width="2.2"/></svg>
  <span class="t" style="left:43px;top:280px;font-size:14.6px;color:#666;text-decoration:line-through">test</span>
  <div class="abs" style="left:0;top:563px;width:260px;height:32px;background:#1e1e1e"></div>
  <span class="t" style="left:7px;top:571px;font-size:13.2px;color:#f0f0f0">Responsive</span>
  <svg style="left:81px;top:575px" width="11" height="7" viewBox="0 0 11 7" fill="none" stroke="#e0e0e0" stroke-width="1.2"><path d="M0.5 0.8 L5.5 6 L10.5 0.8"/></svg>
  <div class="abs" style="left:101px;top:566px;width:52px;height:26px;background:#3c3c3c"></div>
  <span class="t" style="left:103px;top:572px;font-size:13.2px;color:#ccc">262</span>
  <svg style="left:160px;top:574px" width="10" height="10" viewBox="0 0 10 10" stroke="#e0e0e0" stroke-width="1.2"><path d="M0.5 0.5 L9.5 9.5 M9.5 0.5 L0.5 9.5"/></svg>
  <div class="abs" style="left:177px;top:566px;width:52px;height:26px;background:#3c3c3c"></div>
  <span class="t" style="left:179px;top:572px;font-size:13.2px;color:#ccc">496</span>
  <svg style="left:237px;top:573px" width="16" height="13" viewBox="0 0 16 13" fill="none" stroke="#e0e0e0" stroke-width="1.2"><path d="M0 3.5 H15 M11.5 0.5 L15 3.5 L11.5 6.5 M16 9.5 H1 M4.5 6.5 L1 9.5 L4.5 12.5"/></svg>
</div>

<!-- DEBUG TOOLBAR -->
<div id="dbg" class="abs" style="left:163px;top:64px;width:218px;height:32px;background:#333333;box-shadow:0 0 8px 2px rgba(0,0,0,.36)">
  <svg style="left:12px;top:11px" width="8" height="11" viewBox="0 0 8 11" fill="#8a8a8a"><rect x="0" y="0" width="2" height="2"/><rect x="5" y="0" width="2" height="2"/><rect x="0" y="4" width="2" height="2"/><rect x="5" y="4" width="2" height="2"/><rect x="0" y="8" width="2" height="2"/><rect x="5" y="8" width="2" height="2"/></svg>
  <svg style="left:30px;top:10px" width="9" height="12" viewBox="0 0 9 12" fill="#75beff"><rect x="0" y="0" width="2" height="12"/><rect x="6" y="0" width="2" height="12"/></svg>
  <svg style="left:53px;top:9px" width="16" height="14" viewBox="0 0 16 14" fill="none" stroke="#4d7399" stroke-width="1.5"><path d="M1.5 8 A5.5 5.5 0 0 1 12 5.5 M12.5 1 V6 H7.5"/><circle cx="7.5" cy="11.5" r="1.5" fill="#4d7399" stroke="none"/></svg>
  <svg style="left:81px;top:9px" width="11" height="15" viewBox="0 0 11 15" fill="none" stroke="#4d7399" stroke-width="1.5"><path d="M5.5 0 V8.5 M1.5 5 L5.5 9 L9.5 5"/><circle cx="5.5" cy="13" r="1.6" fill="#4d7399" stroke="none"/></svg>
  <svg style="left:107px;top:8px" width="11" height="15" viewBox="0 0 11 15" fill="none" stroke="#4d7399" stroke-width="1.5"><path d="M5.5 10 V1.5 M1.5 5 L5.5 1 L9.5 5"/><circle cx="5.5" cy="13.4" r="1.6" fill="#4d7399" stroke="none"/></svg>
  <svg style="left:131px;top:9px" width="15" height="15" viewBox="0 0 15 15" fill="none" stroke="#89d185" stroke-width="1.7"><path d="M3 4 A5.6 5.6 0 1 1 1.8 8.5 M2.2 0.5 V4.6 H6.4"/></svg>
  <svg style="left:159px;top:10px" width="12" height="12" viewBox="0 0 12 12" fill="none" stroke="#f48771" stroke-width="1.5"><rect x="0.8" y="0.8" width="10.4" height="10.4"/></svg>
  <div class="abs" style="left:184px;top:8px;width:1px;height:16px;background:#6a6a6a"></div>
  <svg style="left:197px;top:10px" width="16" height="14" viewBox="0 0 16 14" fill="none" stroke="#c5c5c5" stroke-width="1.3"><path d="M8 9.5 H1.8 a1 1 0 0 1 -1 -1 V1.8 a1 1 0 0 1 1 -1 H13 a1 1 0 0 1 1 1 V6"/><path d="M9 5.5 V13 L11 11 L13.8 11 Z" stroke-width="1.1"/></svg>
</div>

<!-- STATUS BAR -->
<div id="status" class="abs">
  <svg style="left:16px;top:4px" width="10" height="14" viewBox="0 0 10 14" fill="none" stroke="#fff" stroke-width="1.1"><circle cx="2.5" cy="2.5" r="1.8"/><circle cx="2.5" cy="11.5" r="1.8"/><circle cx="7.5" cy="4.5" r="1.8"/><path d="M2.5 4.3 V9.7 M7.5 6.3 C7.5 8.5 4.5 8 2.5 9"/></svg>
  <span class="t" style="left:32px">main*</span>
  <svg style="left:77px;top:4px" width="15" height="13" viewBox="0 0 15 13" fill="none" stroke="#fff" stroke-width="1.2"><path d="M2 5.5 A5.5 5 0 0 1 12.5 4.5 M13 7.5 A5.5 5 0 0 1 2.5 8.5 M13 1 V4.7 H9.3 M2 12 V8.3 H5.7"/></svg>
  <svg style="left:109px;top:4px" width="13" height="13" viewBox="0 0 13 13" fill="none" stroke="#fff" stroke-width="1.1"><circle cx="6.5" cy="6.5" r="5.7"/><path d="M4 4 L9 9 M9 4 L4 9"/></svg>
  <span class="t" style="left:125px">0</span>
  <svg style="left:136px;top:4px" width="14" height="13" viewBox="0 0 14 13" fill="none" stroke="#fff" stroke-width="1.1" stroke-linejoin="round"><path d="M7 0.8 L13.2 12.2 H0.8 Z M7 4.8 V8.6 M7 9.8 V11"/></svg>
  <span class="t" style="left:152px">0</span>
  <svg style="left:174px;top:3px" width="16" height="15" viewBox="0 0 16 15" fill="none" stroke="#fff" stroke-width="1.1" stroke-linejoin="round"><path d="M5.5 5.5 V1 L14.5 7 L9.5 10.3"/><ellipse cx="4.5" cy="10.5" rx="2.2" ry="2.9"/><path d="M2.8 8.2 a1.7 1.7 0 0 1 3.4 0 M2.3 10.5 H0.4 M6.7 10.5 H8.6 M2.6 9 L1 7.8 M6.4 9 L8 7.8 M2.6 12.2 L1 13.4 M6.4 12.2 L8 13.4"/></svg>
  <span class="t" style="left:193px;font-size:11.8px">Launch Edge Headless and attach DevTools (demo-to-do)</span>
  <svg style="left:892px;top:5px" width="12" height="11" viewBox="0 0 12 11" fill="none" stroke="#fff" stroke-width="1.3"><path d="M0.8 6 L4.2 9.6 L11.2 0.8"/></svg>
  <span class="t" style="left:908px;font-weight:bold;font-size:11.5px">Spell</span>
  <svg style="left:948px;top:4px" width="15" height="14" viewBox="0 0 15 14" fill="none" stroke="#fff" stroke-width="1.1"><path d="M5 4 V1 H14 V7.5 H11.5 L9.5 9.5 V7.5"/><circle cx="5" cy="7" r="2.2"/><path d="M0.8 13.5 C1 10.5 3 9.8 5 9.8 C7 9.8 9 10.5 9.2 13.5"/></svg>
  <svg style="left:980px;top:4px" width="13" height="14" viewBox="0 0 13 14" fill="none" stroke="#fff" stroke-width="1.1"><path d="M1.5 10.5 C2.8 9 2.6 7.5 2.6 5.5 A3.9 4.2 0 0 1 10.4 5.5 C10.4 7.5 10.2 9 11.5 10.5 Z M5 11 A1.6 1.8 0 0 0 8 11"/></svg>
</div>

</div>
</body>
</html>
